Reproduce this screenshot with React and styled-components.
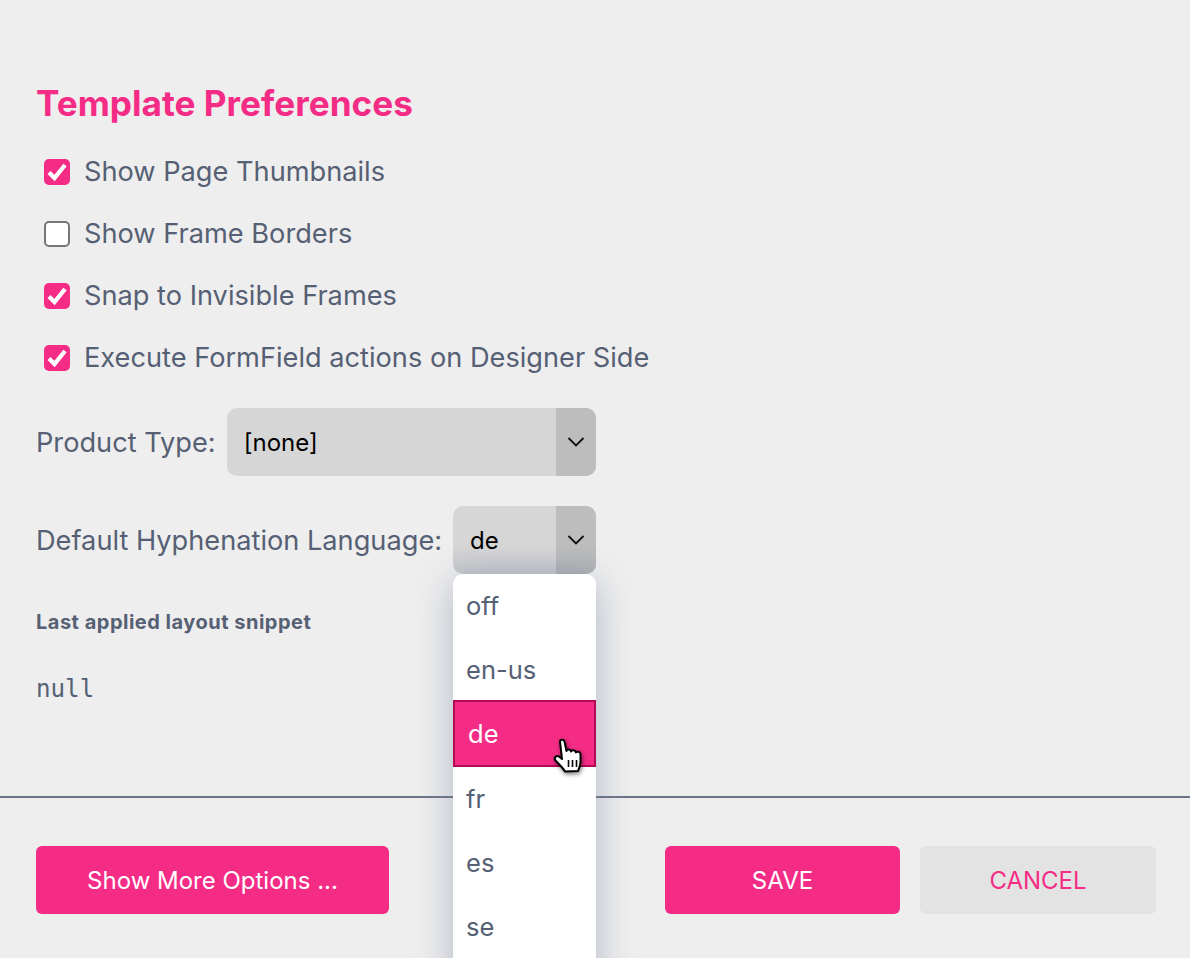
import styled, { createGlobalStyle } from "styled-components";

const Global = createGlobalStyle`
    html, body {
        margin: 0;
        padding: 0;
        background: #eeeeee;
    }
    * {
        box-sizing: border-box;
    }
`;

const options = [
    { label: "Show Page Thumbnails", checked: true },
    { label: "Show Frame Borders", checked: false },
    { label: "Snap to Invisible Frames", checked: true },
    { label: "Execute FormField actions on Designer Side", checked: true },
];

const languages = ["off", "en-us", "de", "fr", "es", "se"];

function Chevron() {
    return (
        <svg width="18" height="12" viewBox="0 0 18 12" fill="none">
            <path d="M1.5 2 L9 9.5 L16.5 2" stroke="#111" strokeWidth="1.9" />
        </svg>
    );
}

function Check() {
    return (
        <svg width="22" height="20" viewBox="0 0 22 20" fill="none">
            <path d="M3 10.5 L8.5 16 L19 3" stroke="#fff" strokeWidth="4.2" />
        </svg>
    );
}

function HandCursor() {
    return (
        <svg width="34" height="40" viewBox="0 0 34 40">
            <path
                d="M8 3.5 C8 1 12 1 12.5 3.5 L14.5 13 C15 11 18.5 11 19 13.5 C20 11.5 23.5 12 24 14.5 C25 13 28.5 13.5 28.5 16.5 L28.5 24 C28.5 28 27 30 26 33 L13 33.5 C11 30 8 27.5 3.5 22.5 C1.5 20 4 17 7 18.5 L10 21 Z"
                fill="#fff"
                stroke="#000"
                strokeWidth="2"
                strokeLinejoin="round"
            />
            <path d="M16.5 22 V29 M20.5 22 V29 M24.5 22 V29" stroke="#000" strokeWidth="1.6" />
        </svg>
    );
}

export default function App() {
    return (
        <Page>
            <Global />
            <Content>
                <Title>Template Preferences</Title>
                <CheckList>
                    {options.map(option => (
                        <CheckRow key={option.label}>
                            <Box checked={option.checked}>{option.checked && <Check />}</Box>
                            <RowLabel>{option.label}</RowLabel>
                        </CheckRow>
                    ))}
                </CheckList>
                <SelectRow>
                    <RowText>Product Type:</RowText>
                    <Select>
                        <SelectValue>[none]</SelectValue>
                        <SelectArrow><Chevron /></SelectArrow>
                    </Select>
                </SelectRow>
                <SelectRow>
                    <RowText>Default Hyphenation Language:</RowText>
                    <SelectWrap>
                        <Select open>
                            <SelectValue>de</SelectValue>
                            <SelectArrow open><Chevron /></SelectArrow>
                        </Select>
                        <Dropdown>
                            {languages.map(language => (
                                <DropItem key={language} active={language === "de"}>
                                    {language}
                                    {language === "de" && <Cursor><HandCursor /></Cursor>}
                                </DropItem>
                            ))}
                        </Dropdown>
                    </SelectWrap>
                </SelectRow>
                <SnippetTitle>Last applied layout snippet</SnippetTitle>
                <Code>null</Code>
            </Content>
            <Footer>
                <Button width="353px">Show More Options ...</Button>
                <RightButtons>
                    <Button width="235px">SAVE</Button>
                    <Button width="236px" secondary>CANCEL</Button>
                </RightButtons>
            </Footer>
        </Page>
    );
}

const Page = styled.div`
    width: 1190px;
    height: 958px;
    overflow: hidden;
    background: #eeeeee;
    font-family: Inter, "Noto Sans", sans-serif;
    color: #566074;
`;

const Content = styled.div`
    height: 796px;
    padding: 81px 34px 0 36px;
`;

const Title = styled.h1`
    margin: 0;
    font-size: 35.2px;
    line-height: 44px;
    font-weight: 700;
    color: #f52c86;
`;

const CheckList = styled.div`
    margin-top: 16px;
    margin-bottom: 19px;
    padding-left: 8px;
`;

const CheckRow = styled.div`
    display: flex;
    align-items: center;
    gap: 14px;
    height: 62px;
`;

const Box = styled.div`
    width: 26px;
    height: 26px;
    border-radius: 5px;
    display: flex;
    align-items: center;
    justify-content: center;
    background: ${({ checked }) => checked ? "#f52c86" : "#fff"};
    border: ${({ checked }) => checked ? "none" : "2px solid #767676"};
`;

const RowLabel = styled.span`
    font-size: 27.2px;
    line-height: 36px;
`;

const RowText = styled(RowLabel)`
    padding-top: 2px;
`;

const SelectRow = styled.div`
    display: flex;
    align-items: center;
    justify-content: flex-start;
    gap: 11px;
    width: 560px;
    height: 68px;
    margin-bottom: 30px;
`;

const SelectWrap = styled.div`
    position: relative;
    flex: 1;
`;

const Select = styled.div`
    flex: 1;
    height: 68px;
    display: flex;
    border-radius: 10px;
    overflow: hidden;
    background: ${({ open }) => open ? "linear-gradient(#d6d6d6 60%, #c4c6ca)" : "#d6d6d6"};
    color: #000;
    font-size: 24px;
`;

const SelectValue = styled.div`
    flex: 1;
    display: flex;
    align-items: center;
    padding-left: 17px;
`;

const SelectArrow = styled.div`
    width: 40px;
    display: flex;
    align-items: center;
    justify-content: center;
    background: ${({ open }) => open ? "linear-gradient(#bdbdbd 60%, #aeb0b4)" : "#bdbdbd"};
`;

const Dropdown = styled.div`
    position: absolute;
    top: 68px;
    left: 0;
    right: 0;
    z-index: 5;
    padding-bottom: 40px;
    background: #fff;
    border-radius: 10px 10px 0 0;
    box-shadow: 0 8px 36px rgba(100, 116, 150, 0.45);
`;

const DropItem = styled.div`
    position: relative;
    height: ${({ active }) => active ? "67px" : "64px"};
    margin-top: ${({ active }) => active ? "-2px" : "0"};
    display: flex;
    align-items: center;
    padding-left: 13px;
    padding-bottom: ${({ active }) => active ? "0" : "2px"};
    font-size: 25.5px;
    color: ${({ active }) => active ? "#fff" : "#566074"};
    background: ${({ active }) => active ? "#f52c86" : "transparent"};
    border: ${({ active }) => active ? "2px solid #b20a55" : "none"};
`;

const Cursor = styled.div`
    position: absolute;
    left: 97px;
    top: 36px;
    line-height: 0;
    filter: drop-shadow(1px 2px 2px rgba(0, 0, 0, 0.5));
`;

const SnippetTitle = styled.div`
    margin-top: 34px;
    font-size: 20px;
    line-height: 28px;
    font-weight: 700;
    letter-spacing: 0.5px;
`;

const Code = styled.div`
    margin-top: 39px;
    font-family: "DejaVu Sans Mono", "Liberation Mono", monospace;
    font-size: 24.2px;
    line-height: 28px;
`;

const Footer = styled.div`
    border-top: 2px solid #6b7585;
    padding: 48px 34px 0 36px;
    display: flex;
    justify-content: space-between;
`;

const RightButtons = styled.div`
    display: flex;
    gap: 20px;
`;

const Button = styled.button`
    width: ${({ width }) => width};
    height: 68px;
    border: none;
    border-radius: 6px;
    font-family: inherit;
    font-size: 24px;
    background: ${({ secondary }) => secondary ? "#e3e3e3" : "#f52c86"};
    color: ${({ secondary }) => secondary ? "#f52c86" : "#fff"};
`;
